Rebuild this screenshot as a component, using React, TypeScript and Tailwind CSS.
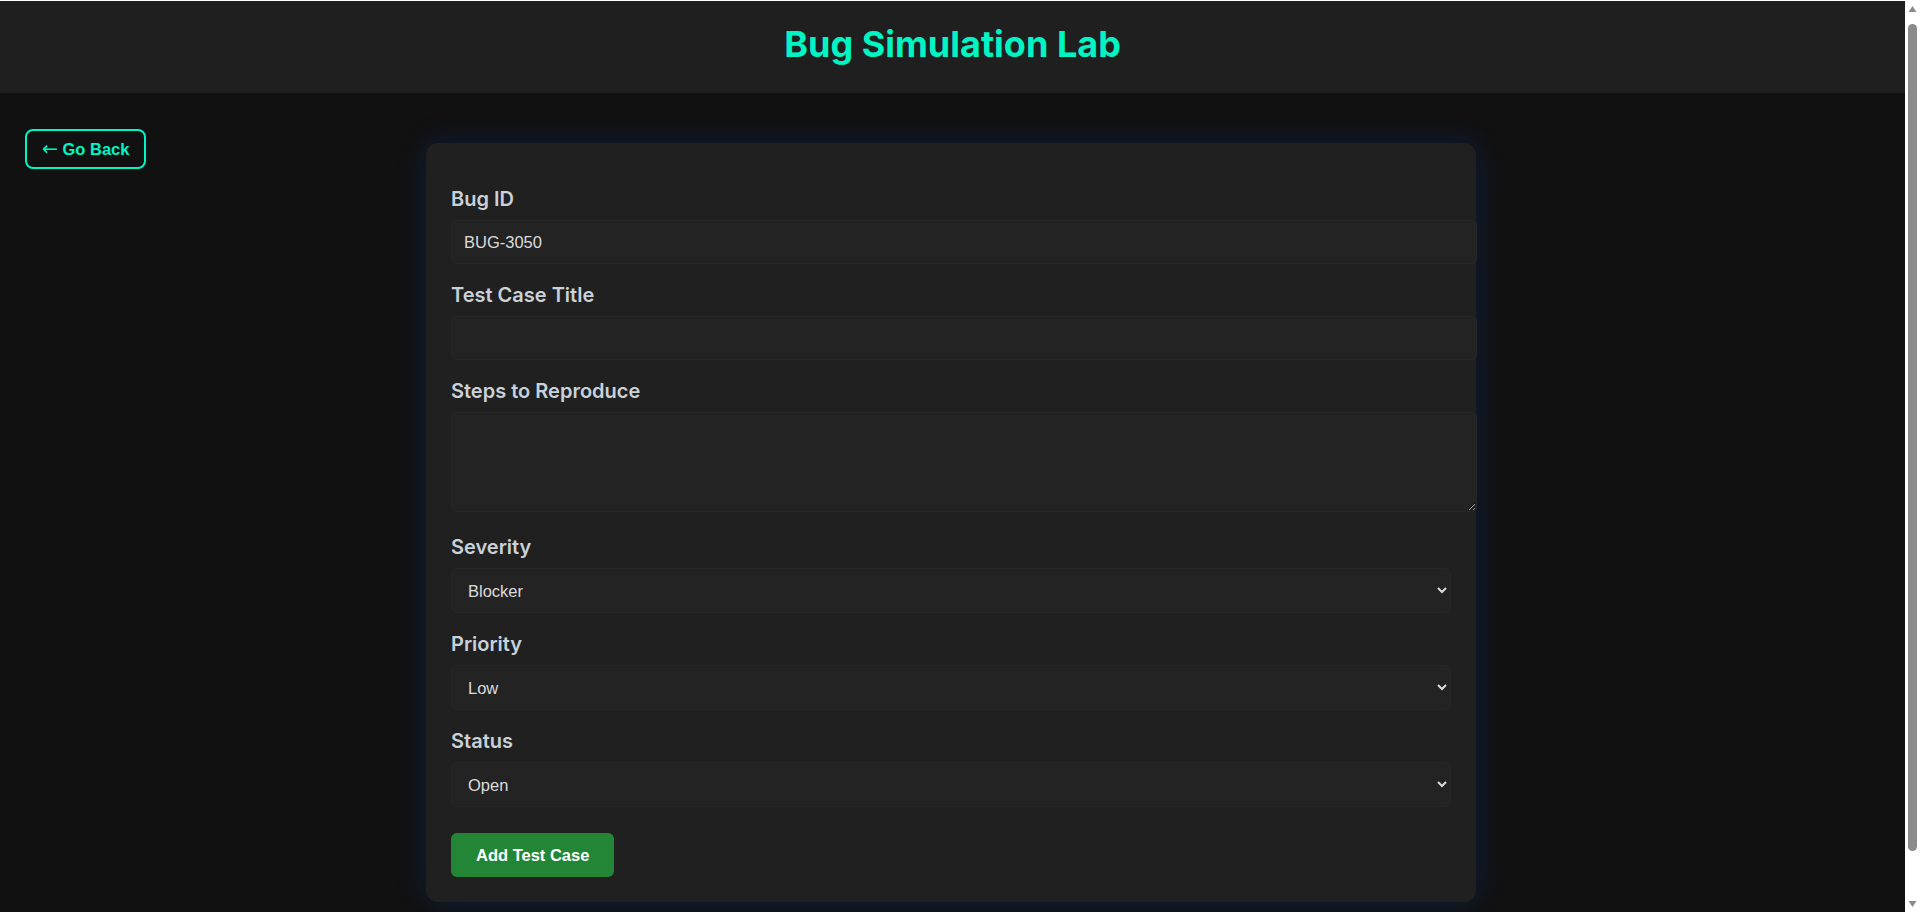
import { useState } from "react";

const inputClass =
    "box-content block w-full px-3 py-3 bg-[#232323] border border-[#262626] rounded-[5px] text-[#dcdcdc] text-[16.5px] leading-[18px] font-['Liberation_Sans',Arial,sans-serif] outline-none";

const selectClass =
    "block w-full h-[45px] pl-3 pr-[14px] py-0 bg-[#232323] border border-[#262626] rounded-[5px] text-[#dcdcdc] text-[16.5px] font-['Liberation_Sans',Arial,sans-serif] outline-none";

const labelClass = "block mb-[9px] text-[20px] leading-[23px] font-semibold text-[#c9d1d9]";

export default function App() {
    const [bugId, setBugId] = useState("BUG-3050")
    const [title, setTitle] = useState("")
    const [steps, setSteps] = useState("")
    const [severity, setSeverity] = useState("Blocker")
    const [priority, setPriority] = useState("Low")
    const [status, setStatus] = useState("Open")

    return (
        <div className="h-screen flex bg-[#111111] border-t border-white font-['Inter',sans-serif] overflow-hidden">
            <div className="flex-1 min-w-0">
                {/* Header */}
                <header className="bg-[#1f1f1f] h-[92px] pt-[21px]">
                    <h1 className="text-center text-[36px] leading-[44px] font-bold text-[#00f5c4]">
                        Bug Simulation Lab
                    </h1>
                </header>

                {/* Contenu */}
                <main className="grid grid-cols-[1fr_1050px_1fr] pr-[3px] pb-[66px]">
                    <div className="pl-[25px] pt-[36px]">
                        <button className="border-2 border-[#00f5c4] rounded-lg px-[15px] py-[8px] leading-[19px] text-[#00f5c4] text-[16.5px] font-bold font-['Liberation_Sans',Arial,sans-serif]">
                            <span className="font-['DejaVu_Sans'] font-normal text-[19px] leading-none">←</span> Go Back
                        </button>
                    </div>

                    <div className="mt-[50px] bg-[#202020] rounded-xl px-[25px] pt-[25px] pb-[25px] shadow-[0_0_30px_rgba(0,90,255,0.18)]">
                        <label className={labelClass + " mt-5"}>Bug ID</label>
                        <input className={inputClass} value={bugId} onChange={(e) => setBugId(e.target.value)} />

                        <label className={labelClass + " mt-5"}>Test Case Title</label>
                        <input className={inputClass} value={title} onChange={(e) => setTitle(e.target.value)} />

                        <label className={labelClass + " mt-5"}>Steps to Reproduce</label>
                        <textarea
                            className={inputClass + " h-[74px]"}
                            value={steps}
                            onChange={(e) => setSteps(e.target.value)}
                        />

                        <label className={labelClass + " mt-[24px]"}>Severity</label>
                        <select className={selectClass} value={severity} onChange={(e) => setSeverity(e.target.value)}>
                            <option>Low</option>
                            <option>Medium</option>
                            <option>High</option>
                            <option>Critical</option>
                            <option>Blocker</option>
                        </select>

                        <label className={labelClass + " mt-5"}>Priority</label>
                        <select className={selectClass} value={priority} onChange={(e) => setPriority(e.target.value)}>
                            <option>Low</option>
                            <option>Medium</option>
                            <option>High</option>
                        </select>

                        <label className={labelClass + " mt-5"}>Status</label>
                        <select className={selectClass} value={status} onChange={(e) => setStatus(e.target.value)}>
                            <option>Open</option>
                            <option>In Progress</option>
                            <option>Resolved</option>
                            <option>Closed</option>
                        </select>

                        <button className="mt-[26px] bg-[#238636] rounded-md px-[25px] py-[13px] leading-[18px] text-white text-[16.5px] font-bold font-['Liberation_Sans',Arial,sans-serif]">
                            Add Test Case
                        </button>
                    </div>
                    <div />
                </main>
            </div>

            {/* Barre de défilement */}
            <div className="w-[15px] shrink-0 bg-white flex flex-col items-center">
                <svg width="15" height="17" viewBox="0 0 15 17">
                    <path d="M3.5 11 L7.5 5 L11.5 11 Z" fill="#8b8b8b" />
                </svg>
                <div className="w-[9px] h-[827px] mt-[6px] rounded-full bg-[#8b8b8b]" />
                <div className="flex-1" />
                <svg width="15" height="17" viewBox="0 0 15 17">
                    <path d="M3.5 6 L7.5 12 L11.5 6 Z" fill="#8b8b8b" />
                </svg>
            </div>
        </div>
    )
}
